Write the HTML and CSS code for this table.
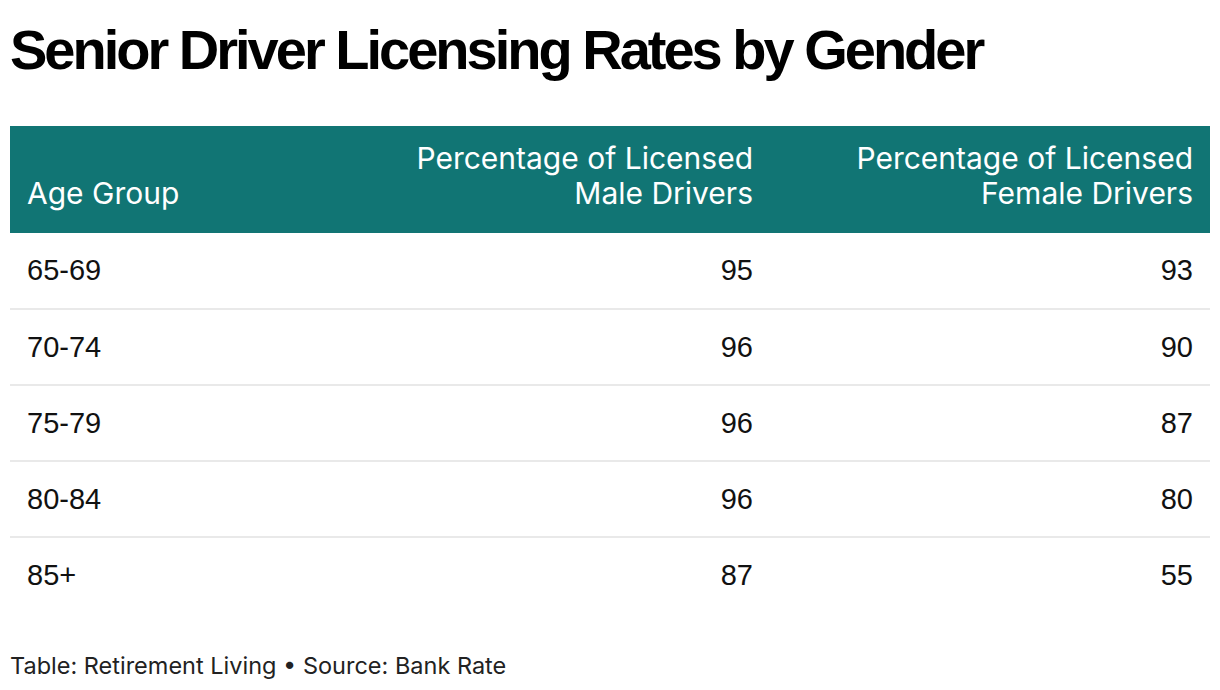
FILE: index.html
```html
<!DOCTYPE html>
<html>
<head>
<meta charset="utf-8">
<link rel="stylesheet" href="styles.css">
</head>
<body>
<div class="chart">
  <h1 class="title">Senior Driver Licensing Rates by Gender</h1>
  <table class="tbl">
    <colgroup><col class="c1"><col class="c2"><col class="c3"></colgroup>
    <thead>
      <tr>
        <th class="left">Age Group</th>
        <th class="right">Percentage of Licensed<br>Male Drivers</th>
        <th class="right">Percentage of Licensed<br>Female Drivers</th>
      </tr>
    </thead>
    <tbody>
      <tr><td class="left">65-69</td><td class="right">95</td><td class="right">93</td></tr>
      <tr><td class="left">70-74</td><td class="right">96</td><td class="right">90</td></tr>
      <tr><td class="left">75-79</td><td class="right">96</td><td class="right">87</td></tr>
      <tr><td class="left">80-84</td><td class="right">96</td><td class="right">80</td></tr>
      <tr class="last"><td class="left">85+</td><td class="right">87</td><td class="right">55</td></tr>
    </tbody>
  </table>
  <div class="footer">Table: Retirement Living • Source: Bank Rate</div>
</div>
</body>
</html>
```
FILE: styles.css
```css
html, body {
  margin: 0;
  padding: 0;
  background: #ffffff;
}
.chart {
  padding: 0 10px;
  width: 1200px;
}
.title {
  margin: 0;
  padding-top: 22px;
  font-family: "Liberation Sans", Arial, sans-serif;
  font-weight: bold;
  font-size: 56px;
  letter-spacing: -3px;
  line-height: 56px;
  color: #000;
  height: 126px;
  box-sizing: border-box;
}
.tbl {
  width: 1200px;
  border-collapse: collapse;
  table-layout: fixed;
}
.c1 { width: 320px; }
.c2 { width: 440px; }
.c3 { width: 440px; }
.tbl thead tr {
  background: #117574;
}
.tbl th {
  font-family: "Inter", "Roboto", sans-serif;
  font-weight: 400;
  font-size: 30px;
  line-height: 35px;
  color: #ffffff;
  vertical-align: bottom;
  height: 107px;
  box-sizing: border-box;
  padding: 0 17px 22px 17px;
}
.tbl td {
  font-family: "Liberation Sans", Arial, sans-serif;
  font-size: 29px;
  color: #111;
  height: 76px;
  box-sizing: border-box;
  padding: 0 17px;
  border-bottom: 2px solid #e9e9e9;
  vertical-align: middle;
}
.tbl tr.last td {
  border-bottom: none;
}
.left { text-align: left; }
.right { text-align: right; }
.footer {
  margin-top: 38px;
  font-family: "Inter", "Roboto", sans-serif;
  font-size: 23.5px;
  color: #222;
}
```
